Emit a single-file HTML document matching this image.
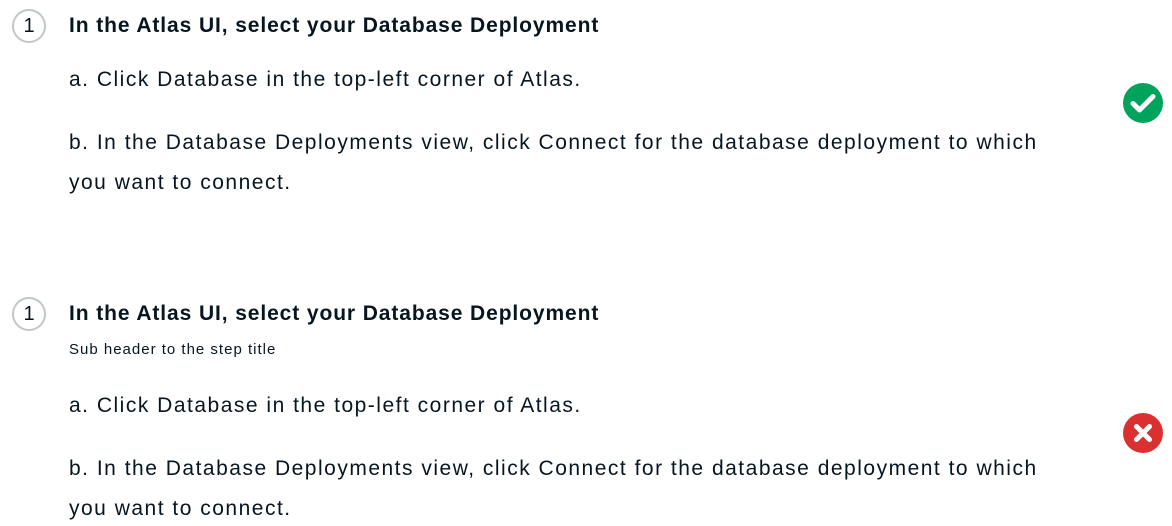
<!DOCTYPE html>
<html><head><meta charset="utf-8"><style>
body{margin:0;width:1172px;height:526px;background:#fff;font-family:"Liberation Sans",sans-serif;color:#061621;position:relative;overflow:hidden}
.t{position:absolute;left:69px;white-space:nowrap}
.h{font-size:21px;font-weight:bold;letter-spacing:0.9px}
.b{font-size:21px;letter-spacing:1.5px}
.s{font-size:15px;letter-spacing:1px}
.c{position:absolute;width:34px;height:34px;border:2px solid #c1c7c6;border-radius:50%;box-sizing:border-box;text-align:center;line-height:30px;font-size:20px;color:#061621}
</style></head><body>
<div class="c" style="left:12px;top:9px">1</div>
<div class="t h" style="top:14px">In the Atlas UI, select your Database Deployment</div>
<div class="t b" style="top:68px">a. Click Database in the top-left corner of Atlas.</div>
<div class="t b" style="top:131px">b. In the Database Deployments view, click Connect for the database deployment to which</div>
<div class="t b" style="top:171px">you want to connect.</div>
<svg style="position:absolute;left:1122px;top:82px" width="42" height="42" viewBox="0 0 42 42"><circle cx="21" cy="21" r="20" fill="#00a35c"/><path d="M11 21.5l6.5 6.5L31 14.5" stroke="#fff" stroke-width="5" fill="none" stroke-linecap="round" stroke-linejoin="round"/></svg>

<div class="c" style="left:12px;top:297px">1</div>
<div class="t h" style="top:302px">In the Atlas UI, select your Database Deployment</div>
<div class="t s" style="top:341px">Sub header to the step title</div>
<div class="t b" style="top:394px">a. Click Database in the top-left corner of Atlas.</div>
<div class="t b" style="top:457px">b. In the Database Deployments view, click Connect for the database deployment to which</div>
<div class="t b" style="top:497px">you want to connect.</div>
<svg style="position:absolute;left:1122px;top:412px" width="42" height="42" viewBox="0 0 42 42"><circle cx="21" cy="21" r="20" fill="#db3030"/><path d="M14.5 14.5l13 13M27.5 14.5l-13 13" stroke="#fff" stroke-width="5" fill="none" stroke-linecap="round"/></svg>
</body></html>
